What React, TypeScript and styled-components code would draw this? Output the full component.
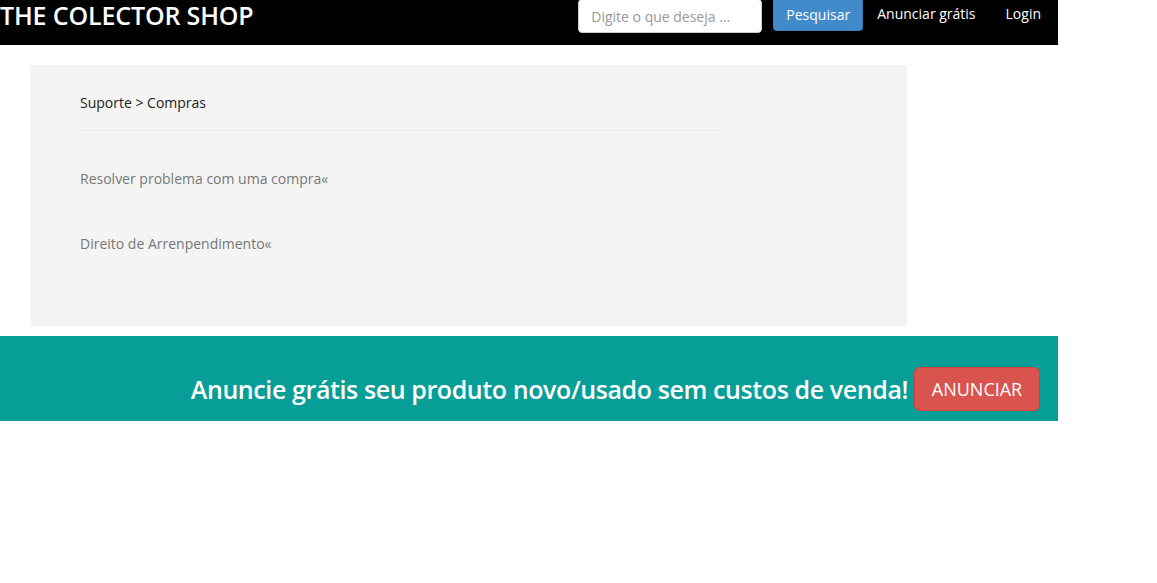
import React from "react";
import styled, { createGlobalStyle } from "styled-components";

const Global = createGlobalStyle`
  html, body { margin: 0; padding: 0; background: #fff; }
  body { font-family: "Open Sans", "Liberation Sans", sans-serif; font-size: 14px; color: #333; }
  * { box-sizing: border-box; }
`;

const Page = styled.div`
  width: 1058px;
`;

const Header = styled.header`
  height: 45px;
  background: #000;
  display: flex;
  justify-content: space-between;
  align-items: flex-start;
`;

const Logo = styled.div`
  color: #fff;
  font-size: 25px;
  font-weight: 600;
  line-height: 30px;
  letter-spacing: -0.15px;
`;

const Nav = styled.div`
  display: flex;
  align-items: flex-start;
  padding-right: 17px;
`;

const Search = styled.input`
  width: 184px;
  height: 34px;
  border: 1px solid #ccc;
  border-radius: 4px;
  padding: 6px 12px;
  font-family: inherit;
  font-size: 14px;
  color: #555;
  margin-top: -1px;
  &::placeholder { color: #999; }
`;

const SearchButton = styled.button`
  margin-left: 11px;
  width: 90px;
  height: 31px;
  background: #428bca;
  border: 1px solid #357ebd;
  border-top: none;
  border-radius: 0 0 4px 4px;
  color: #fff;
  font-family: inherit;
  font-size: 14px;
  padding: 0;
  line-height: 28px;
`;

const NavLink = styled.a<{ $ml: number }>`
  margin-left: ${(p) => p.$ml}px;
  color: #fff;
  font-size: 14px;
  line-height: 28px;
  text-decoration: none;
`;

const Panel = styled.section`
  margin: 20px 0 0 30px;
  width: 877px;
  height: 261px;
  background: #f4f4f4;
  padding: 28px 0 0 50px;
`;

const Crumb = styled.div`
  color: #222;
  font-size: 14px;
  line-height: 20px;
  padding-bottom: 17px;
  width: 640px;
  border-bottom: 1px solid #ebebeb;
`;

const LinkList = styled.div`
  display: flex;
  flex-direction: column;
  gap: 45px;
  padding-top: 38px;
`;

const HelpLink = styled.a`
  color: #777;
  font-size: 14px;
  line-height: 20px;
  text-decoration: none;
`;

const Banner = styled.section`
  margin-top: 10px;
  height: 85px;
  background: #069e96;
  display: flex;
  justify-content: flex-end;
  align-items: center;
  padding: 20px 18px 0 0;
  gap: 6px;
`;

const BannerText = styled.h2`
  margin: 0;
  color: #fff;
  font-size: 25px;
  font-weight: 600;
  letter-spacing: -0.4px;
  line-height: 36px;
`;

const BigButton = styled.button`
  width: 126px;
  height: 44px;
  background: #d9534f;
  border: 1px solid #d43f3a;
  border-radius: 6px;
  color: #fff;
  font-family: inherit;
  font-size: 18px;
  padding: 0;
`;

export default function App() {
  return (
    <Page>
      <Global />
      <Header>
        <Logo>THE COLECTOR SHOP</Logo>
        <Nav>
          <Search placeholder="Digite o que deseja ..." />
          <SearchButton>Pesquisar</SearchButton>
          <NavLink $ml={14} href="#">Anunciar grátis</NavLink>
          <NavLink $ml={30} href="#">Login</NavLink>
        </Nav>
      </Header>
      <Panel>
        <Crumb>Suporte &gt; Compras</Crumb>
        <LinkList>
          <HelpLink href="#">Resolver problema com uma compra«</HelpLink>
          <HelpLink href="#">Direito de Arrenpendimento«</HelpLink>
        </LinkList>
      </Panel>
      <Banner>
        <BannerText>Anuncie grátis seu produto novo/usado sem custos de venda!</BannerText>
        <BigButton>ANUNCIAR</BigButton>
      </Banner>
    </Page>
  );
}
